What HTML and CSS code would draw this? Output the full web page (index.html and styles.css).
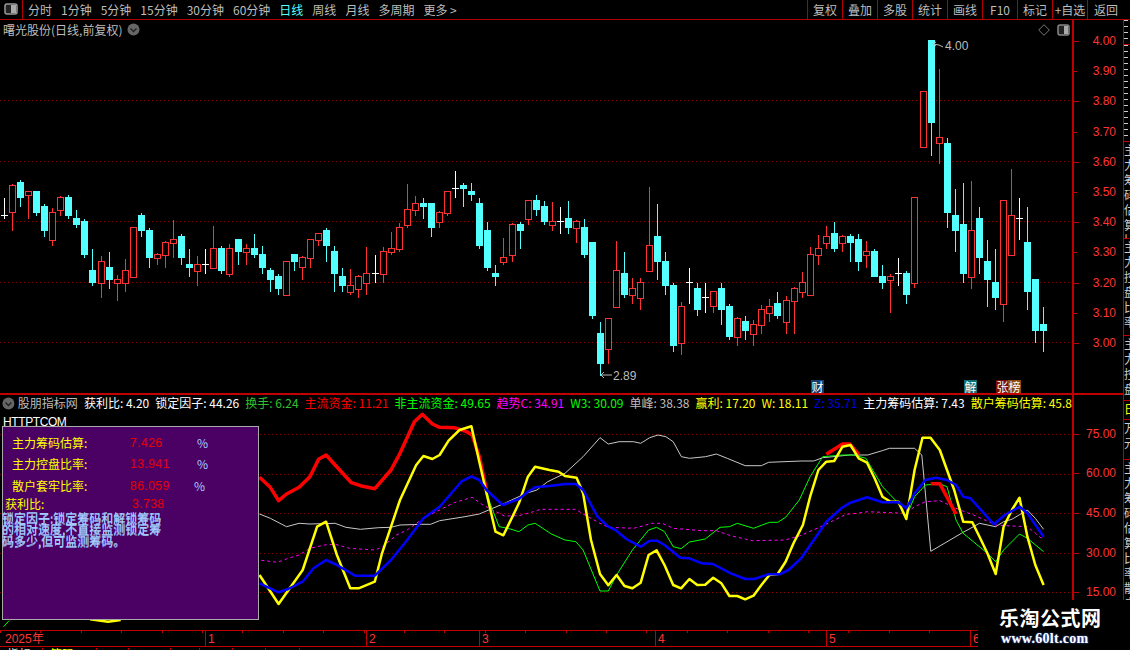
FILE: index.html
```html
<!DOCTYPE html>
<html lang="zh-CN">
<head>
  <meta charset="UTF-8">
  <title>曙光股份 日线</title>
  <link rel="stylesheet" href="styles.css">
</head>
<body>
  <header class="toolbar">
    <div class="layout-btn">
      <svg width="14" height="12" viewBox="0 0 14 12"><rect x="1" y="1" width="12" height="10" rx="2" fill="#222" stroke="#999" stroke-width="1.5"/><rect x="7" y="2" width="5" height="8" fill="#aaa"/></svg>
    </div>
    <nav class="periods">
      <span>分时</span>
      <span>1分钟</span>
      <span>5分钟</span>
      <span>15分钟</span>
      <span>30分钟</span>
      <span>60分钟</span>
      <span class="active">日线</span>
      <span>周线</span>
      <span>月线</span>
      <span>多周期</span>
      <span>更多 &gt;</span>
    </nav>
    <div class="actions">
      <span>复权</span>
      <span>叠加</span>
      <span>多股</span>
      <span>统计</span>
      <span>画线</span>
      <span>F10</span>
      <span>标记</span>
      <span>+自选</span>
      <span>返回</span>
    </div>
  </header>

  <div class="workspace">
    <div class="charts">
      <section class="panel price-panel">
        <div class="plot">
          <svg id="price-chart" class="chart" width="1072" height="373" viewBox="0 20 1072 373"></svg>
          <div class="chart-title">
            曙光股份(日线,前复权)
            <svg class="round-btn" width="13" height="13" viewBox="0 0 13 13"><circle cx="6.5" cy="6.5" r="6" fill="#666"/><path d="M3.5 5.5l3 3 3-3" fill="none" stroke="#222" stroke-width="1.4"/></svg>
          </div>
          <div class="chart-tools">
            <svg width="12" height="12" viewBox="0 0 12 12"><path d="M6 .7L11.3 6 6 11.3.7 6z" fill="none" stroke="#777"/></svg>
            <svg width="13" height="12" viewBox="0 0 13 12"><rect x="1" y="1" width="11" height="10" rx="2" fill="#222" stroke="#888" stroke-width="1.5"/><rect x="7" y="2" width="4" height="8" fill="#aaa"/></svg>
          </div>
          <svg class="price-mark high-mark" width="12" height="8" viewBox="0 0 12 8"><path d="M11 6L7 4 1 3M1 3l3-2M1 3l3 2" fill="none" stroke="#bbb"/></svg>
          <span class="price-note high-note">4.00</span>
          <svg class="price-mark low-mark" width="12" height="8" viewBox="0 0 12 8"><path d="M12 4H1M1 4l3-3M1 4l3 3" fill="none" stroke="#bbb"/></svg>
          <span class="price-note low-note">2.89</span>
          <span class="badge badge-cai">财</span>
          <span class="badge badge-jie">解</span>
          <span class="badge badge-zhang">张</span>
          <span class="badge badge-bang">榜</span>
        </div>
        <div class="axis price-axis">
          <div class="tick major">4.00</div>
          <div class="tick">3.90</div>
          <div class="tick major">3.80</div>
          <div class="tick">3.70</div>
          <div class="tick major">3.60</div>
          <div class="tick">3.50</div>
          <div class="tick major">3.40</div>
          <div class="tick">3.30</div>
          <div class="tick major">3.20</div>
          <div class="tick">3.10</div>
          <div class="tick major">3.00</div>
        </div>
      </section>

      <section class="panel indicator-panel">
        <div class="plot">
          <div class="legend">
            <svg class="round-btn" width="13" height="13" viewBox="0 0 13 13"><circle cx="6.5" cy="6.5" r="6" fill="#666"/><path d="M3.5 5.5l3 3 3-3" fill="none" stroke="#222" stroke-width="1.4"/></svg>
            <span class="c-grey">股朋指标网</span>
            <span class="c-white">获利比: 4.20</span>
            <span class="c-white">锁定因子: 44.26</span>
            <span class="c-dim-green">换手: 6.24</span>
            <span class="c-red">主流资金: 11.21</span>
            <span class="c-green">非主流资金: 49.65</span>
            <span class="c-magenta">趋势C: 34.91</span>
            <span class="c-green">W3: 30.09</span>
            <span class="c-grey">单峰: 38.38</span>
            <span class="c-yellow">赢利: 17.20</span>
            <span class="c-yellow">W: 18.11</span>
            <span class="c-blue">Z: 35.71</span>
            <span class="c-white">主力筹码估算: 7.43</span>
            <span class="c-yellow">散户筹码估算: 45.8</span>
          </div>
          <svg id="indicator-chart" class="chart" width="1072" height="219" viewBox="0 411 1072 219"></svg>
          <div class="site-name">HTTPTCOM</div>
          <div class="info-box">
            <div class="info-row"><span>主力筹码估算:</span><b>7.426</b><i>%</i></div>
            <div class="info-row"><span>主力控盘比率:</span><b>13.941</b><i>%</i></div>
            <div class="info-row shift"><span>散户套牢比率:</span><b>86.059</b><i>%</i></div>
            <div class="info-row wide"><span>获利比:</span><b>3.738</b></div>
            <p>锁定因子:锁定筹码和解锁筹码的相对速度,不直接监测锁定筹码多少,但可监测筹码。</p>
          </div>
        </div>
        <div class="axis indicator-axis">
          <div class="tick">75.00</div>
          <div class="tick">60.00</div>
          <div class="tick">45.00</div>
          <div class="tick">30.00</div>
          <div class="tick">15.00</div>
        </div>
      </section>

      <div class="date-axis">
        <span>2025年</span>
        <span>1</span>
        <span>2</span>
        <span>3</span>
        <span>4</span>
        <span>5</span>
        <span>6</span>
      </div>
    </div>

    <aside class="side">
      <div class="cell ticks h25"></div>
      <div class="cell ticks h97"></div>
      <div class="cell h97">主力筹码估算比</div>
      <div class="cell h97">主力控盘比率</div>
      <div class="cell h65">主力控盘</div>
      <div class="cell yellow h19">日</div>
      <div class="cell h40">万元</div>
      <div class="cell rest">主力筹码估算比率散户套牢</div>
    </aside>
  </div>

  <div class="tabs">
    <span class="w43">指标</span>
    <span class="w54 yellow">筹码</span>
    <span class="w32">A</span>
    <span class="w42"></span>
    <span class="w29"></span>
    <span class="w33"></span>
    <span class="w33"></span>
    <span class="w34"></span>
  </div>

  <div class="watermark">
    <strong>乐淘公式网</strong>
    <em>www.60lt.com</em>
  </div>

  <script src="chart.js"></script>
</body>
</html>
```

FILE: styles.css
```css
html, body {
  margin: 0;
  height: 100%;
}

body {
  position: relative;
  width: 1130px;
  height: 650px;
  overflow: hidden;
  background-color: #000;
  color: #bdbdbd;
  font-family: "Noto Sans CJK SC", "Liberation Sans", sans-serif;
  font-size: 12px;
  line-height: 1;
}

.toolbar {
  display: flex;
  height: 19px;
  border-bottom: 1px solid #b00000;
}

.layout-btn {
  width: 23px;
  display: flex;
  align-items: flex-start;
  justify-content: center;
  padding-top: 3px;
  box-sizing: border-box;
  border-right: 1px solid #b00000;
}

.periods {
  display: flex;
  align-items: center;
  gap: 9px;
  padding-left: 5px;
}

.periods .active {
  color: #54ffff;
}

.actions {
  display: flex;
  margin-left: auto;
  margin-right: 6px;
}

.actions span {
  width: 34px;
  border-left: 1px solid #b00000;
  display: flex;
  align-items: center;
  justify-content: center;
  white-space: nowrap;
}

.actions span:last-child {
  width: 36px;
}

.workspace {
  display: flex;
  height: 627px;
}

.charts {
  width: 1123px;
}

.panel {
  display: flex;
}

.price-panel {
  height: 373px;
  border-bottom: 2px solid #c00000;
}

.indicator-panel {
  height: 235px;
}

.plot {
  position: relative;
  width: 1072px;
  overflow: hidden;
}

.chart {
  display: block;
}

.chart-title {
  position: absolute;
  left: 3px;
  top: 3px;
  display: flex;
  align-items: center;
  gap: 5px;
  white-space: nowrap;
}

.chart-tools {
  position: absolute;
  top: 4px;
  right: 2px;
  display: flex;
  gap: 7px;
}

.price-mark,
.price-note,
.badge {
  position: absolute;
}

.price-note {
  color: #bdbdbd;
  font-family: "Liberation Sans", sans-serif;
}

.high-mark { left: 932px; top: 21px; }
.high-note { left: 945px; top: 20px; }
.low-mark { left: 600px; top: 351px; }
.low-note { left: 613px; top: 350px; }

.badge {
  top: 360px;
  width: 13px;
  height: 13px;
  color: #fff;
  display: flex;
  align-items: center;
  justify-content: center;
}

.badge-cai { left: 811px; background-color: #12406e; }
.badge-jie { left: 964px; background-color: #0b6f75; }
.badge-zhang { left: 996px; background-color: #7a0c0c; }
.badge-bang { left: 1008px; background-color: #8a4a10; }

.axis {
  width: 49px;
  border-left: 2px solid #c00000;
  color: #ff3333;
  font-family: "Liberation Sans", sans-serif;
}

.price-axis {
  padding-top: 6px;
  box-sizing: border-box;
}

.price-axis .tick {
  height: 30.2px;
}

.indicator-axis {
  padding-top: 19px;
  box-sizing: border-box;
  height: 205px;
}

.indicator-axis .tick {
  height: 39.6px;
}

.tick {
  position: relative;
  display: flex;
  align-items: center;
  justify-content: flex-end;
  padding-right: 5px;
}

.tick::before {
  content: "";
  position: absolute;
  left: 0;
  top: 50%;
  width: 3px;
  height: 1px;
  background-color: #c00000;
}

.tick.major::before,
.indicator-axis .tick::before {
  width: 5px;
}

.legend {
  display: flex;
  align-items: center;
  gap: 6px;
  height: 16px;
  padding-left: 2px;
  white-space: nowrap;
}

.legend .round-btn {
  margin-right: -3px;
}

.c-grey { color: #bdbdbd; }
.c-white { color: #fff; }
.c-dim-green { color: #2fc02f; }
.c-red { color: #f00; }
.c-green { color: #0f0; }
.c-magenta { color: #f0f; }
.c-yellow { color: #ff0; }
.c-blue { color: #0000e0; }

.site-name {
  position: absolute;
  left: 3px;
  top: 21px;
  color: #fff;
  font-family: "Liberation Sans", sans-serif;
  letter-spacing: -0.4px;
}

.info-box {
  position: absolute;
  left: 2px;
  top: 31px;
  width: 255px;
  height: 192px;
  background-color: #4b0063;
  border: 1px solid #aaa;
  color: #a5cdff;
}

.info-row {
  display: grid;
  grid-template-columns: 118px 67px auto;
  height: 21.5px;
  align-items: center;
  padding-left: 9px;
  color: #ff0;
}

.info-row:first-child {
  margin-top: 5px;
}

.info-row b {
  font-weight: normal;
  font-family: "Liberation Sans", sans-serif;
  letter-spacing: 0.5px;
  color: #e60000;
}

.info-row i {
  font-style: normal;
  color: #a5cdff;
}

.info-row.shift {
  grid-template-columns: 118px 64px auto;
}

.info-row.wide {
  grid-template-columns: 127px auto;
  padding-left: 2px;
  height: 15px;
}

.info-box p {
  margin: 0 0 0 -1px;
  width: 160px;
  line-height: 11.5px;
  text-shadow: 0 1px 0 #8fb4ee;
}

.date-axis {
  display: grid;
  grid-template-columns: 205px 161px 113px 176px 171px 144px 8px;
  width: 978px;
  height: 15px;
  border-top: 1px solid #c00000;
  border-bottom: 1px solid #c00000;
  color: #ff3333;
  font-family: "Liberation Sans", sans-serif;
  background-image: repeating-linear-gradient(90deg, #c00000 0 1px, transparent 1px 40.4px);
  background-size: 100% 2px;
  background-repeat: no-repeat;
  background-position: 0 0;
}

.date-axis span {
  display: flex;
  align-items: center;
  padding-left: 2px;
  border-left: 1px solid #c00000;
}

.date-axis span:first-child {
  border-left: 0;
  padding-left: 5px;
}

.side {
  flex: 1;
  border-left: 1px solid #c00000;
  overflow: hidden;
}

.cell {
  width: 12px;
  box-sizing: border-box;
  border-bottom: 1px solid #c00000;
  overflow: hidden;
  color: #ccc;
  line-height: 15px;
}

.cell.ticks {
  background-image: repeating-linear-gradient(#ccc 0 1px, transparent 1px 6px);
  background-size: 4px 100%;
  background-repeat: no-repeat;
}

.cell.yellow {
  color: #ff0;
}

.h19 { height: 19px; }
.h25 { height: 25px; }
.h40 { height: 40px; }
.h65 { height: 65px; }
.h97 { height: 97px; }
.rest { height: 200px; border-bottom: 0; }

.tabs {
  display: flex;
  height: 3px;
  line-height: 1;
  color: #ddd;
  padding-top: 1px;
}

.tabs span {
  box-sizing: border-box;
  border-right: 1px solid #c00000;
  padding-left: 7px;
}

.tabs .yellow {
  color: #ff0;
}

.w29 { width: 29px; }
.w32 { width: 32px; }
.w33 { width: 33px; }
.w34 { width: 34px; }
.w42 { width: 42px; }
.w43 { width: 43px; }
.w54 { width: 54px; }

.watermark {
  position: absolute;
  right: 0;
  bottom: 0;
  width: 152px;
  height: 50px;
  box-sizing: border-box;
  padding: 8px 0 0 21px;
  background-color: #000;
  color: #fff;
}

.watermark strong {
  display: block;
  font-size: 20px;
  line-height: 20px;
  letter-spacing: 0.5px;
}

.watermark em {
  display: block;
  margin-top: 3px;
  margin-left: 2px;
  font-family: "Liberation Serif", serif;
  font-style: normal;
  font-weight: bold;
  font-size: 14px;
  line-height: 15px;
  letter-spacing: 0.3px;
  text-shadow: 0 0 2px #4a7cff;
}
```

FILE: chart.js
```js
const NS = 'http://www.w3.org/2000/svg';

// values below were read off a 3x crop of the chart, so y = base + v / 3
// candle: [kind, high, bodyTop, bodyBottom, low]  r = up, c = down, w = doji
const candles = [
  ['w',81,135,135,144],['r',40,46,127,180],['c',27,37,81,108],['r',64,64,74,144],['c',63,63,126,135],
  ['c',99,108,180,198],['r',112,127,209,225],['r',75,82,119,135],['c',72,81,135,144],['c',117,144,162,171],
  ['c',144,153,252,261],['c',234,300,336,345],['r',255,274,338,381],['c',243,291,327,354],['r',312,328,338,390],
  ['r',264,300,338,363],['r',172,172,320,320],['c',126,135,180,198],['c',171,180,261,291],['r',246,253,263,282],
  ['r',210,217,254,291],['r',148,208,218,261],['c',189,198,261,282],['c',234,282,291,318],['r',255,283,302,345],
  ['w',234,283,283,309],['r',165,235,293,294],['c',225,234,300,309],['r',220,235,311,318],['c',207,207,243,282],
  ['r',220,235,245,282],['c',189,234,252,261],['c',225,252,291,309],['c',292,300,327,363],['c',309,318,354,372],
  ['r',274,274,374,374],['c',252,252,273,300],['r',255,262,292,327],['r',208,208,263,291],['r',190,190,209,225],
  ['c',171,180,225,273],['c',225,243,309,363],['c',292,318,345,363],['r',294,346,365,372],['r',312,319,356,381],
  ['r',228,310,338,372],['w',252,310,310,336],['r',228,244,311,336],['r',183,235,245,252],['r',155,172,236,243],
  ['r',39,118,164,171],['r',75,100,119,135],['c',81,99,108,144],['c',99,99,171,198],['r',120,127,155,171],
  ['r',64,64,128,135],['w',0,55,55,81],['c',36,45,54,108],['c',36,63,72,90],['c',81,99,225,234],
  ['c',153,180,291,300],['c',282,309,318,345],['r',201,262,275,282],['r',155,163,254,273],['c',153,162,180,234],
  ['r',91,91,146,162],['c',72,90,117,135],['c',90,108,153,162],['r',93,154,164,180],['w',108,154,154,189],
  ['c',90,144,171,189],['r',148,154,173,216],['c',144,171,252,261],['c',216,216,435,444],['c',453,489,579,615],
  ['r',445,445,536,579],['r',210,301,410,410],['c',243,309,372,381],['r',321,355,374,399],['r',321,337,383,417],
  ['r',48,226,302,302],['c',99,198,273,327],['c',243,273,345,372],['c',337,345,525,543],['r',393,409,518,552],
  ['w',291,337,337,399],['c',336,354,417,435],['w',336,382,382,426],['r',363,364,409,426],['c',336,354,417,462],
  ['c',399,408,498,507],['r',437,445,500,525],['c',435,453,480,507],['r',447,463,491,525],['r',402,418,464,489],
  ['r',384,409,428,453],['c',363,399,435,444],['r',375,391,455,489],['r',348,355,392,489],['r',303,337,365,381],
  ['r',228,253,374,374],['r',192,235,254,282],['r',165,199,218,234],['c',153,189,234,243],['r',192,199,218,243],
  ['c',189,198,216,273],['c',189,207,273,300],['r',210,244,254,291],['c',234,243,318,318],['c',282,318,336,354],
  ['r',310,319,329,426],['w',261,310,310,345],['c',300,309,372,399],['r',82,82,338,352],['r',-237,-237,-70,-70],
  ['c',-393,-390,-144,-45],['r',-306,-98,-80,-20],['c',-98,-80,126,170],['c',53,135,180,243],['c',36,162,309,336],
  ['r',30,181,320,354],['c',108,144,261,309],['c',207,273,327,408],['c',234,336,381,417],['r',91,91,401,453],
  ['r',-6,136,254,254],['w',82,145,145,207],['c',108,216,363,417],['c',327,327,480,516],['c',408,462,480,543]
];

// lines: x is in the same traced scale, right half starts at 1568
const R = 1568;
const right = pts => pts.map((v, i) => (i % 2 ? v : v + R));

const greyLine = [720,372,750,385,795,410,830,400,860,402,930,400,960,412,1000,418,1050,413,1085,412,1110,405,1170,403,1195,403,1220,392,1290,380,1330,372,1400,340,1460,310,1490,300,1520,275,1568,250]
  .concat(right([50,200,97,143,120,162,150,155,190,155,210,160,235,143,258,135,280,140,300,155,323,200,345,205,390,200,420,192,450,205,500,227,545,227,565,217,655,213,690,213,715,203,790,195,840,195,880,182,900,175,970,175,990,195,1015,484,1100,430,1150,400,1195,410,1217,395,1240,388,1283,360,1305,385,1328,418]));

const greenLine = [1350,300,1360,340,1385,410,1410,415,1440,425,1465,405,1485,400,1530,432,1568,450]
  .concat(right([30,455,50,480,97,603,120,603,143,555,187,480,232,420,254,412,276,425,300,470,322,476,345,456,389,447,430,412,456,410,478,400,523,415,567,397,590,397,612,382,650,330,680,260,715,200,770,195,800,195,835,205,881,290,925,340,947,380,970,320,1000,285,1040,281,1060,290,1085,390,1105,430,1172,490,1195,515,1217,480,1261,432,1283,445,1328,485]));

const magentaLine = [725,511,770,517,800,505,830,495,860,475,900,465,930,463,970,475,1040,480,1060,472,1100,435,1130,420,1175,385,1220,360,1260,338,1310,322,1340,345,1400,378,1440,377,1480,365,1500,358,1568,358]
  .concat(right([30,358,50,372,97,400,120,412,190,415,215,408,240,400,270,400,300,415,380,422,420,422,460,437,520,452,610,450,650,438,720,405,780,373,810,370,840,365,945,370,970,350,1000,335,1040,332,1085,355,1140,378,1195,405,1240,408,1283,410,1328,450]));

const redLine = [720,262,750,292,773,332,795,312,830,292,860,260,884,208,905,195,930,225,975,278,1000,287,1040,296,1085,240,1110,190,1150,95,1172,73,1200,102,1220,112,1260,113,1295,125,1310,135,1330,200,1350,300];
const redSeg2 = right([725,193,770,162,790,162,815,193]);
const redSeg3 = right([1015,281,1040,281,1085,372]);

const yellowLine = [720,555,773,642,840,540,880,410,905,395,935,495,972,595,995,595,1040,575,1060,490,1110,330,1155,225,1175,198,1200,207,1220,195,1245,152,1275,120,1308,109,1330,215,1350,310,1375,425,1397,436,1440,340,1465,260,1485,230,1525,240,1550,245,1568,258]
  .concat(right([32,263,50,310,72,450,97,552,120,586,143,555,165,588,187,595,210,578,232,495,254,481,276,525,300,585,322,595,345,567,367,585,389,584,411,563,434,580,456,618,478,618,500,628,523,617,545,585,567,555,590,552,612,515,634,460,660,405,680,320,703,240,725,215,747,213,770,170,792,165,815,205,838,218,859,265,881,320,903,335,925,335,947,387,970,240,992,143,1014,143,1040,180,1060,240,1080,300,1105,395,1130,397,1150,440,1172,490,1195,552,1217,410,1240,360,1261,323,1283,440,1305,525,1328,585]));
const yellowBit = [250,688,300,695,335,690];

const blueLine = [720,580,773,607,800,597,840,575,870,535,905,510,935,525,985,557,1040,557,1085,510,1130,450,1175,385,1220,350,1280,275,1308,259,1330,270,1350,300,1395,345,1440,327,1465,305,1485,292,1530,287,1568,282]
  .concat(right([30,282,50,300,90,380,120,410,140,420,170,447,210,470,235,452,255,452,276,465,320,503,345,505,380,520,410,522,460,550,500,567,525,567,565,553,595,553,620,540,655,505,700,435,725,395,770,352,792,338,838,322,880,337,925,337,947,355,970,310,1000,270,1030,263,1060,270,1085,285,1105,320,1125,325,1190,403,1220,375,1262,350,1283,370,1328,440]));

function add(svg, tag, attrs) {
  const el = document.createElementNS(NS, tag);
  Object.keys(attrs).forEach(k => el.setAttribute(k, attrs[k]));
  svg.appendChild(el);
  return el;
}

function gridLine(svg, y) {
  add(svg, 'line', {
    x1: 0, x2: 1072, y1: y + 0.5, y2: y + 0.5,
    stroke: '#900000', 'stroke-dasharray': '1 3'
  });
}

function drawCandle(svg, c, i) {
  const [kind, high, top, bottom, low] = c;
  const px = v => Math.round(170 + v / 3) + 0.5;
  const x = Math.floor(4.3 + 8.0588 * i) + 0.5;
  const color = { r: '#ff3232', c: '#54ffff', w: '#fff' }[kind];
  const crisp = { 'shape-rendering': 'crispEdges' };

  add(svg, 'line', { x1: x, x2: x, y1: px(high), y2: px(low), stroke: color, ...crisp });
  if (kind === 'w') {
    add(svg, 'line', { x1: x - 3.5, x2: x + 3.5, y1: px(top), y2: px(top), stroke: color, ...crisp });
  } else if (kind === 'r') {
    add(svg, 'rect', { x: x - 3, y: px(top), width: 6, height: px(bottom) - px(top), fill: '#000', stroke: color, ...crisp });
  } else {
    add(svg, 'rect', { x: x - 3.5, y: px(top) - 0.5, width: 7, height: px(bottom) - px(top) + 1, fill: color, ...crisp });
  }
}

function drawLine(svg, pts, color, width, dash) {
  const out = [];
  for (let i = 0; i < pts.length; i += 2) {
    out.push((pts[i] / 2.775).toFixed(1) + ',' + (390 + pts[i + 1] / 3).toFixed(1));
  }
  const attrs = { points: out.join(' '), fill: 'none', stroke: color, 'stroke-width': width, 'stroke-linejoin': 'round' };
  if (dash) attrs['stroke-dasharray'] = dash;
  add(svg, 'polyline', attrs);
}

const priceChart = document.getElementById('price-chart');
[100, 161, 221, 282, 342].forEach(y => gridLine(priceChart, y));
candles.forEach((c, i) => drawCandle(priceChart, c, i));

const indicatorChart = document.getElementById('indicator-chart');
[434, 474, 513, 553, 592].forEach(y => gridLine(indicatorChart, y));
drawLine(indicatorChart, greyLine, '#c8c8c8', 1);
drawLine(indicatorChart, greenLine, '#0f0', 1);
drawLine(indicatorChart, magentaLine, '#f0f', 1, '3 3');
drawLine(indicatorChart, redLine, '#f00', 3.5);
drawLine(indicatorChart, redSeg2, '#f00', 3.5);
drawLine(indicatorChart, redSeg3, '#f00', 3.5);
drawLine(indicatorChart, yellowLine, '#ff0', 2.5);
drawLine(indicatorChart, yellowBit, '#ff0', 2.5);
drawLine(indicatorChart, blueLine, '#0000ff', 2.5);
drawLine(indicatorChart, [10, 710, 25, 692], '#0f0', 1);
```
